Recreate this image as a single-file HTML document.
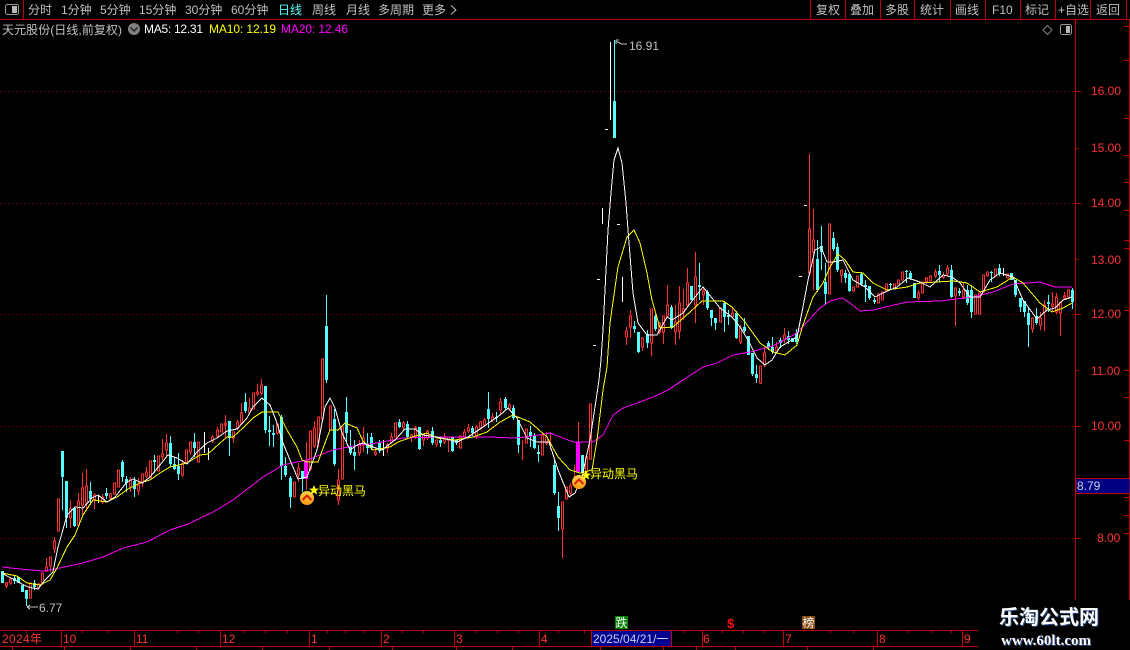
<!DOCTYPE html>
<html><head><meta charset="utf-8"><title>天元股份</title>
<style>
html,body{margin:0;padding:0;background:#000;width:1130px;height:650px;overflow:hidden}
svg{display:block;position:absolute;left:0;top:0}
text{font-family:"Liberation Sans","WenQuanYi Zen Hei","Noto Sans CJK SC",sans-serif;font-size:12px}
.t{fill:#c0c0c0;font-family:"WenQuanYi Zen Hei","Liberation Sans","Noto Sans CJK SC",sans-serif}
.r{fill:#ff3232}
.y{fill:#ffff00;font-family:"WenQuanYi Zen Hei","Noto Sans CJK SC",sans-serif}
.c{shape-rendering:crispEdges;fill:none}
</style></head><body>
<svg width="1130" height="650" viewBox="0 0 1130 650">
<defs>
<linearGradient id="g" x1="0" y1="0" x2="0" y2="1"><stop offset="0" stop-color="#ffd24a"/><stop offset="1" stop-color="#ff9a10"/></linearGradient>
</defs>
<!-- frame -->
<g class="c" stroke="#c00000">
<path d="M0 19.5H1130M23.5 0V19M810.5 0V19M845.5 0V19M880.5 0V19M914.5 0V19M950.5 0V19M985.5 0V19M1020.5 0V19M1055.5 0V19M1090.5 0V19M1126.5 0V19"/>
<path d="M1075.5 19V600M1129.5 19V600"/>
<path d="M0 630.5H978M0 646.5H978M61.5 630V646M134.5 630V646M220.5 630V646M309.5 630V646M381.5 630V646M454.5 630V646M539.5 630V646M591.5 630V646M671.5 630V646M702.5 630V646M783.5 630V646M877.5 630V646M962.5 630V646"/>
<path d="M26.5 631V633M82.5 631V633M108.5 631V633M177.5 631V633M198.5 631V633M244.5 631V633M265.5 631V633M287.5 631V633M327.5 631V633M345.5 631V633M364.5 631V633M402.5 631V633M423.5 631V633M475.5 631V633M497.5 631V633M518.5 631V633M558.5 631V633M584.5 631V633M683.5 631V633M722.5 631V633M743.5 631V633M763.5 631V633M830.5 631V633M853.5 631V633M907.5 631V633M931.5 631V633M951.5 631V633"/>
<path d="M12.5 647V650M64.5 647V650M130.5 647V650M196.5 647V650M262.5 647V650M329.5 647V650M392.5 647V650M456.5 647V650M512.5 647V650M600.5 647V650M663.5 647V650M696.5 647V650M735.5 647V650M807.5 647V650M873.5 647V650"/>
<path d="M1075 91.5H1081M1075 148.5H1079M1075 203.5H1081M1075 259.5H1079M1075 314.5H1081M1075 370.5H1079M1075 426.5H1081M1075 538.5H1081"/>
<path d="M1124 155.5H1129M1124 182.5H1129M1124 210.5H1129M1124 240.5H1129M1124 248.5H1129M1124 310.5H1129M1124 370.5H1129M1124 397.5H1129M1124 440.5H1129M1124 497.5H1129M1124 515.5H1129M1124 533.5H1129M1124 26.5H1129M1124 60.5H1129M1124 118.5H1129"/>
</g>
<!-- grid -->
<path fill="none" stroke="#900000" stroke-width="1" stroke-dasharray="1 3" d="M0 91.5H1075M0 203.5H1075M0 314.5H1075M0 426.5H1075M0 538.5H1075"/>
<!-- wicks -->
<path class="c" stroke="#ff3232" d="M6.500 582V588M10.500 577V585M38.500 583V589M46.500 558V572M50.500 557V572M54.500 537V553M70.500 500V528M78.500 493V527M82.500 473V515M86.500 469V510M94.500 493V509M102.500 494V504M110.500 493V500M130.500 477V492M138.500 478V495M142.500 474V487M146.500 467V478M162.500 439V460M166.500 434V457M182.500 460V477M190.500 442V455M212.500 435V443M217.500 427V438M225.500 415V438M233.500 432V443M237.500 420V430M241.500 403V425M249.500 398V414M257.500 384V396M261.500 379V395M277.500 424V435M298.500 463V482M306.500 442V490M310.500 431V471M314.500 421V448M318.500 417V447M338.500 469V505M359.500 440V456M363.500 427V452M375.500 448V456M387.500 443V453M391.500 433V444M403.500 421V430M411.500 434V442M415.500 426V439M423.500 434V446M427.500 430V440M436.500 440V447M444.500 433V444M448.500 437V452M464.500 429V439M468.500 424V433M476.500 425V439M480.500 421V430M484.500 418V427M492.500 413V422M500.500 398V414M509.500 403V411M522.500 440V460M546.500 432V445M550.500 432V450M562.500 502V558M570.500 483V495M574.500 465V477M578.500 422V473M626.500 327V345M630.500 310V338M642.500 338V351M651.500 309V356M659.500 322V334M663.500 316V344M667.500 285V318M675.500 305V345M679.500 286V339M683.500 289V320M687.500 268V307M695.500 252V323M703.500 288V305M732.500 308V319M740.500 325V344M760.500 366V384M764.500 347V367M776.500 342V353M784.500 328V343M809.500 154V275M813.500 209V290M841.500 270V283M918.500 290V300M926.500 277V284M935.500 269V278M943.500 272V279M947.500 265V276M955.500 288V326M963.500 282V299M1032.500 318V333M1040.500 312V330M1044.500 300V331M1052.500 292V312M1056.500 293V314M1060.500 302V336M1064.500 292V300M1068.500 289V299"/>
<!-- red bodies -->
<path class="c" stroke="#ff3232" style="fill:#000" d="M5.500 583h2V586h-2zM9.500 579h2V583h-2zM29.500 583h2V598h-2zM37.500 584h2V588h-2zM41.500 573h2V584h-2zM45.500 567h2V571h-2zM49.500 557h2V566h-2zM53.500 541h2V549h-2zM57.500 499h2V531h-2zM69.500 509h2V518h-2zM77.500 501h2V525h-2zM81.500 488h2V505h-2zM85.500 486h2V503h-2zM93.500 495h2V500h-2zM101.500 497h2V502h-2zM109.500 494h2V498h-2zM113.500 483h2V494h-2zM117.500 470h2V487h-2zM129.500 480h2V487h-2zM137.500 485h2V491h-2zM141.500 474h2V483h-2zM145.500 472h2V476h-2zM149.500 461h2V478h-2zM157.500 456h2V471h-2zM161.500 454h2V457h-2zM165.500 443h2V450h-2zM181.500 464h2V475h-2zM185.500 450h2V463h-2zM189.500 442h2V452h-2zM197.500 442h2V462h-2zM211.500 437h2V441h-2zM216.500 430h2V436h-2zM220.500 424h2V432h-2zM224.500 423h2V425h-2zM232.500 432h2V438h-2zM236.500 422h2V428h-2zM240.500 413h2V423h-2zM248.500 408h2V412h-2zM252.500 393h2V409h-2zM256.500 392h2V394h-2zM260.500 385h2V393h-2zM276.500 424h2V433h-2zM293.500 482h2V497h-2zM297.500 468h2V475h-2zM309.500 431h2V469h-2zM313.500 428h2V446h-2zM317.500 417h2V442h-2zM321.500 359h2V419h-2zM329.500 406h2V430h-2zM337.500 480h2V500h-2zM341.500 427h2V479h-2zM358.500 444h2V453h-2zM362.500 438h2V445h-2zM374.500 452h2V454h-2zM386.500 445h2V448h-2zM390.500 437h2V442h-2zM394.500 423h2V437h-2zM402.500 423h2V427h-2zM410.500 435h2V437h-2zM414.500 428h2V437h-2zM422.500 434h2V440h-2zM426.500 431h2V438h-2zM435.500 440h2V444h-2zM443.500 438h2V442h-2zM447.500 437h2V440h-2zM459.500 436h2V448h-2zM463.500 432h2V437h-2zM467.500 428h2V431h-2zM475.500 427h2V437h-2zM479.500 422h2V428h-2zM483.500 420h2V425h-2zM491.500 417h2V420h-2zM499.500 402h2V410h-2zM508.500 405h2V409h-2zM525.500 429h2V443h-2zM541.500 435h2V455h-2zM545.500 437h2V443h-2zM561.500 502h2V529h-2zM565.500 487h2V499h-2zM569.500 486h2V493h-2zM585.500 457h2V472h-2zM589.500 404h2V459h-2zM625.500 331h2V337h-2zM629.500 316h2V327h-2zM641.500 338h2V347h-2zM650.500 309h2V343h-2zM658.500 323h2V332h-2zM662.500 316h2V332h-2zM666.500 305h2V316h-2zM674.500 322h2V332h-2zM678.500 303h2V331h-2zM682.500 309h2V312h-2zM686.500 283h2V305h-2zM694.500 277h2V305h-2zM702.500 291h2V295h-2zM719.500 308h2V322h-2zM731.500 313h2V317h-2zM739.500 328h2V342h-2zM759.500 366h2V383h-2zM763.500 353h2V365h-2zM775.500 347h2V351h-2zM783.500 335h2V339h-2zM808.500 229h2V273h-2zM812.500 240h2V252h-2zM828.500 224h2V294h-2zM840.500 270h2V275h-2zM852.500 287h2V291h-2zM856.500 276h2V287h-2zM877.500 294h2V303h-2zM881.500 292h2V300h-2zM885.500 284h2V291h-2zM893.500 284h2V288h-2zM897.500 280h2V284h-2zM901.500 272h2V280h-2zM917.500 293h2V298h-2zM921.500 282h2V293h-2zM925.500 278h2V282h-2zM929.500 276h2V281h-2zM934.500 272h2V276h-2zM942.500 275h2V277h-2zM946.500 268h2V274h-2zM954.500 288h2V296h-2zM962.500 290h2V297h-2zM974.500 295h2V314h-2zM978.500 293h2V314h-2zM982.500 275h2V292h-2zM986.500 272h2V276h-2zM994.500 269h2V276h-2zM1006.500 274h2V278h-2zM1031.500 318h2V329h-2zM1039.500 318h2V325h-2zM1043.500 305h2V312h-2zM1051.500 304h2V306h-2zM1055.500 297h2V312h-2zM1059.500 302h2V313h-2zM1063.500 296h2V298h-2zM1067.500 290h2V297h-2z"/>
<!-- cyan wicks -->
<path class="c" stroke="#54ffff" d="M14.500 576V584M26.500 590V606M34.500 580V590M62.500 451V510M66.500 481V528M74.500 508V527M90.500 482V503M106.500 488V499M122.500 460V482M126.500 476V492M134.500 477V497M154.500 455V473M170.500 436V467M174.500 458V470M178.500 453V480M194.500 433V457M229.500 421V456M245.500 393V413M265.500 386V433M269.500 416V446M273.500 425V447M281.500 415V480M285.500 457V477M290.500 476V508M302.500 471V492M326.500 295V383M334.500 409V466M346.500 397V442M350.500 430V455M354.500 440V470M367.500 433V454M371.500 433V450M379.500 440V453M399.500 419V428M407.500 421V439M419.500 427V450M432.500 427V445M440.500 437V447M452.500 437V452M456.500 440V445M472.500 426V436M488.500 392V428M496.500 412V422M505.500 397V410M513.500 405V420M518.500 420V453M530.500 426V447M534.500 433V449M538.500 445V462M554.500 460V495M558.500 492V531M614.500 40V101M634.500 321V333M638.500 332V353M647.500 330V348M655.500 314V331M671.500 305V329M699.500 263V300M707.500 290V310M711.500 310V326M715.500 318V330M724.500 301V332M728.500 310V325M736.500 311V339M744.500 318V333M752.500 353V376M756.500 365V383M768.500 341V350M772.500 337V354M780.500 338V348M788.500 331V344M796.500 329V344M817.500 240V292M821.500 226V270M825.500 263V305M833.500 232V251M837.500 243V272M845.500 270V283M849.500 274V292M861.500 272V286M865.500 280V302M869.500 286V300M874.500 298V304M890.500 283V290M906.500 270V283M910.500 271V280M939.500 265V282M951.500 265V298M959.500 288V296M967.500 285V305M971.500 285V318M991.500 271V282M999.500 264V276M1015.500 280V297M1020.500 298V312M1024.500 301V317M1028.500 308V347M1036.500 308V325M1048.500 295V312M1072.500 288V309"/>
<!-- cyan bodies -->
<path class="c" stroke="#54ffff" stroke-width="3" d="M2.500 571V583M14.500 578V581M18.500 577V583M22.500 585V592M26.500 590V599M34.500 583V587M62.500 451V477M66.500 481V518M74.500 508V526M90.500 491V499M106.500 493V496M122.500 462V477M126.500 479V483M134.500 481V489M154.500 460V462M170.500 443V464M174.500 464V469M178.500 466V474M194.500 442V448M229.500 421V438M245.500 402V411M265.500 386V430M269.500 430V432M273.500 433V435M281.500 417V466M285.500 466V475M290.500 478V497M302.500 471V479M326.500 326V380M334.500 419V464M346.500 412V433M350.500 447V453M354.500 452V456M367.500 444V448M371.500 437V448M379.500 442V451M399.500 422V427M407.500 424V437M419.500 427V449M432.500 431V443M440.500 440V443M452.500 437V451M456.500 440V443M472.500 428V433M488.500 409V419M496.500 417V418M505.500 399V408M513.500 408V418M518.500 420V445M530.500 432V436M534.500 436V448M538.500 452V454M554.500 465V493M558.500 506V518M582.500 455V473M614.500 101V138M634.500 326V329M638.500 332V352M647.500 334V343M655.500 316V329M671.500 307V328M691.500 286V300M699.500 285V287M707.500 292V308M711.500 310V318M715.500 318V323M724.500 303V317M728.500 315V317M736.500 313V338M744.500 327V331M748.500 336V355M752.500 353V374M756.500 374V378M768.500 343V347M772.500 347V352M780.500 340V343M788.500 336V340M792.500 338V342M796.500 333V342M817.500 259V290M821.500 246V252M825.500 282V294M833.500 238V249M837.500 247V270M845.500 273V278M849.500 274V291M861.500 274V284M865.500 285V287M869.500 286V298M874.500 300V302M890.500 284V285M906.500 271V272M910.500 273V278M914.500 283V298M939.500 271V275M951.500 270V297M959.500 291V293M967.500 290V303M971.500 290V312M991.500 272V273M999.500 268V274M1011.500 273V280M1015.500 280V295M1020.500 298V307M1024.500 301V312M1028.500 313V325M1036.500 316V323M1048.500 302V304M1072.500 290V302"/>
<!-- magenta signal bars and white doji -->
<path class="c" stroke="#ff00ff" stroke-width="4" d="M306 460V479M578 442V472"/>
<path class="c" stroke="#ffffff" d="M610.500 42V120M602.500 208V224M622.500 277V302M605 129.500H608M617 224.500H620M597 279.500H600M593 345.500H596M799 276.500H802M804 205.500H807M204.500 432V453M208.500 448V460M98.500 495V503M383.500 440V456M1003.500 268V276"/>
<!-- MA lines -->
<polyline class="c" stroke="#ff00ff" points="2,567 20,569 43,571 60,568 83,563 103,557 123,548 147,542 170,530 188,524 213,512 233,500 250,487 263,477 283,465 307,460 333,450 353,446 377,443 403,438 440,437 490,437 513,438 527,437 550,433 563,438 573,442 593,442 603,435 613,415 623,408 640,402 653,397 668,390 683,380 703,367 717,363 733,355 750,352 773,346 797,333 807,322 820,308 830,301 842,298 850,303 860,311 873,310 907,302 940,301 973,297 993,292 1013,284 1040,282 1055,287 1072,287"/>
<polyline class="c" stroke="#ffff00" points="2,573 17,576 27,583 40,585 50,580 57,568 67,547 75,535 83,515 93,500 107,502 117,497 128,489 140,483 150,480 160,473 170,467 187,463 200,455 208,454 220,443 227,437 233,437 243,428 253,418 262,412 278,412 287,430 297,447 302,460 307,462 318,462 325,443 330,430 338,430 345,423 357,428 363,441 373,450 390,447 398,442 415,436 427,433 437,438 455,440 473,437 487,432 500,422 513,415 530,422 547,437 558,457 570,470 580,473 592,470 597,440 603,390 607,367 610,323 618,267 627,237 634,230 640,243 647,273 652,300 660,328 673,327 690,312 702,301 723,301 732,307 745,322 760,343 773,352 785,355 797,345 803,325 813,297 823,283 830,267 838,254 845,260 853,272 863,273 873,283 887,290 907,287 920,283 953,281 967,283 980,292 997,287 1013,277 1023,283 1040,303 1052,312 1063,308 1072,303"/>
<polyline class="c" stroke="#ffffff" points="2,573 5,575 13,579 22,584 28,587 38,589 45,580 53,572 58,547 62,533 67,515 75,507 83,508 92,498 98,495 107,502 115,497 127,482 133,479 142,483 150,477 160,465 168,455 177,458 187,464 197,452 207,443 217,438 227,431 237,429 247,418 253,407 262,398 270,405 277,423 283,443 290,460 298,479 307,477 317,450 325,407 330,398 335,408 342,433 350,450 357,445 363,443 373,447 382,450 395,440 405,429 415,429 423,435 437,437 450,440 457,442 468,437 483,427 500,415 508,408 517,418 527,438 537,442 549,442 558,470 569,497 575,493 582,477 590,440 595,407 599,380 601,360 603,330 608,230 611,193 614,160 618,148 622,163 626,203 629,243 633,293 638,323 647,335 657,335 667,317 672,320 683,313 695,297 703,287 712,298 720,308 732,317 740,327 748,340 757,358 765,365 772,360 780,347 797,337 803,307 808,280 815,250 821,247 827,262 833,262 843,260 853,280 865,287 875,297 883,293 897,287 908,278 920,282 930,287 943,275 952,277 960,283 970,297 980,297 990,280 1000,273 1013,277 1023,300 1037,319 1047,310 1055,308 1063,300 1072,297"/>
<!-- high/low markers -->
<path class="c" stroke="#c0c0c0" d="M616 42H618L621 44H627M616 40H619M616 40V44"/>
<path class="c" stroke="#c0c0c0" d="M27 607H38M27 607L30 605M27 607L30 609"/>
<text class="t" x="629" y="50" style="font-family:'Liberation Sans'">16.91</text>
<text class="t" x="39" y="612" style="font-family:'Liberation Sans'">6.77</text>
<!-- signals -->
<circle cx="307" cy="498" r="7" fill="url(#g)"/>
<path d="M302.500 500L307 495.500L311.500 500" fill="none" stroke="#d82000" stroke-width="2"/>
<circle cx="579" cy="482" r="7" fill="url(#g)"/>
<path d="M574.500 484L579 479.500L583.500 484" fill="none" stroke="#d82000" stroke-width="2"/>
<polygon points="314,485 315.400,488.500 319,488.800 316.200,491 317.200,494.500 314,492.600 310.800,494.500 311.800,491 309,488.800 312.600,488.500" fill="#ffff00"/>
<polygon points="586,470 587.400,473.500 591,473.800 588.200,476 589.200,479.500 586,477.600 582.800,479.500 583.800,476 581,473.800 584.600,473.500" fill="#ffff00"/>
<text class="y" x="318" y="495">异动黑马</text>
<text class="y" x="590" y="478">异动黑马</text>
<!-- toolbar -->
<rect x="5.500" y="4.500" width="13" height="10" rx="2" fill="none" stroke="#9a9a9a"/>
<rect x="12" y="6" width="5" height="7" fill="#b8b8b8"/>
<text class="t" x="28" y="14">分时</text>
<text class="t" x="61" y="14">1分钟</text>
<text class="t" x="100" y="14">5分钟</text>
<text class="t" x="139" y="14">15分钟</text>
<text class="t" x="185" y="14">30分钟</text>
<text class="t" x="231" y="14">60分钟</text>
<text class="t" x="278" y="14" style="fill:#54ffff">日线</text>
<text class="t" x="312" y="14">周线</text>
<text class="t" x="346" y="14">月线</text>
<text class="t" x="378" y="14">多周期</text>
<text class="t" x="422" y="14">更多</text>
<path d="M451 5.500L456 10L451 14.500" fill="none" stroke="#c0c0c0"/>
<text class="t" x="816" y="14">复权</text>
<text class="t" x="850" y="14">叠加</text>
<text class="t" x="885" y="14">多股</text>
<text class="t" x="920" y="14">统计</text>
<text class="t" x="955" y="14">画线</text>
<text class="t" x="992" y="14" style="font-family:'Liberation Sans'">F10</text>
<text class="t" x="1025" y="14">标记</text>
<text class="t" x="1058" y="14">+自选</text>
<text class="t" x="1096" y="14">返回</text>
<!-- info line -->
<text class="t" x="2" y="34" textLength="120">天元股份(日线,前复权)</text>
<circle cx="134" cy="29" r="6" fill="#808080"/>
<path d="M130.500 27.500L134 31L137.500 27.500" fill="none" stroke="#222" stroke-width="1.500"/>
<text x="144" y="33" fill="#ffffff" textLength="59">MA5: 12.31</text>
<text x="209" y="33" fill="#ffff00" textLength="67">MA10: 12.19</text>
<text x="281" y="33" fill="#ff00ff" textLength="67">MA20: 12.46</text>
<path d="M1047.500 25.500L1052 30L1047.500 34.500L1043 30Z" fill="none" stroke="#808080"/>
<rect x="1060.500" y="24.500" width="11" height="10" rx="2" fill="none" stroke="#9a9a9a"/>
<rect x="1066" y="26" width="4" height="7" fill="#b8b8b8"/>
<!-- price axis -->
<text class="r" x="1091" y="95">16.00</text>
<text class="r" x="1091" y="152">15.00</text>
<text class="r" x="1091" y="207">14.00</text>
<text class="r" x="1091" y="264">13.00</text>
<text class="r" x="1091" y="318">12.00</text>
<text class="r" x="1091" y="375">11.00</text>
<text class="r" x="1091" y="430">10.00</text>
<text class="r" x="1097" y="542">8.00</text>
<rect x="1076" y="478.500" width="54" height="15" fill="#000080" stroke="#c00000"/>
<text x="1077" y="490" fill="#c8d0f0">8.79</text>
<!-- time axis -->
<text class="r" x="2" y="643" textLength="40" style="font-family:'Liberation Sans','WenQuanYi Zen Hei',sans-serif">2024年</text>
<text class="r" x="63" y="643">10</text>
<text class="r" x="136" y="643">11</text>
<text class="r" x="222" y="643">12</text>
<text class="r" x="311" y="643">1</text>
<text class="r" x="383" y="643">2</text>
<text class="r" x="456" y="643">3</text>
<text class="r" x="541" y="643">4</text>
<text class="r" x="703" y="643">6</text>
<text class="r" x="785" y="643">7</text>
<text class="r" x="879" y="643">8</text>
<text class="r" x="964" y="643">9</text>
<rect x="592" y="631" width="79" height="15" fill="#000090"/>
<text x="593" y="643" fill="#c8d0f0" style="font-family:'Liberation Sans','WenQuanYi Zen Hei',sans-serif">2025/04/21/一</text>
<!-- tags -->
<rect x="615" y="616" width="13" height="13" fill="#008000"/>
<text x="615.500" y="627" class="t" style="fill:#fff">跌</text>
<text x="727" y="628" fill="#ff1010" style="font-weight:bold;font-size:13px">$</text>
<rect x="802" y="616" width="13" height="13" fill="#8a4a10"/>
<text x="802.500" y="627" class="t" style="fill:#fff">榜</text>
<!-- watermark -->
<rect x="985" y="602" width="145" height="48" fill="#000"/>
<text x="999" y="624" fill="#2a4a88" style="font-family:'WenQuanYi Zen Hei','Noto Sans CJK SC',sans-serif;font-size:20px;font-weight:bold" dx="1" dy="1">乐淘公式网</text>
<text x="999" y="624" fill="#ffffff" style="font-family:'WenQuanYi Zen Hei','Noto Sans CJK SC',sans-serif;font-size:20px;font-weight:bold">乐淘公式网</text>
<text x="1001" y="645" fill="#2a4a88" style="font-family:'Liberation Serif',serif;font-size:15px;font-weight:bold" dx="1" dy="1">www.60lt.com</text>
<text x="1001" y="645" fill="#ffffff" style="font-family:'Liberation Serif',serif;font-size:15px;font-weight:bold">www.60lt.com</text>
</svg>
</body></html>
